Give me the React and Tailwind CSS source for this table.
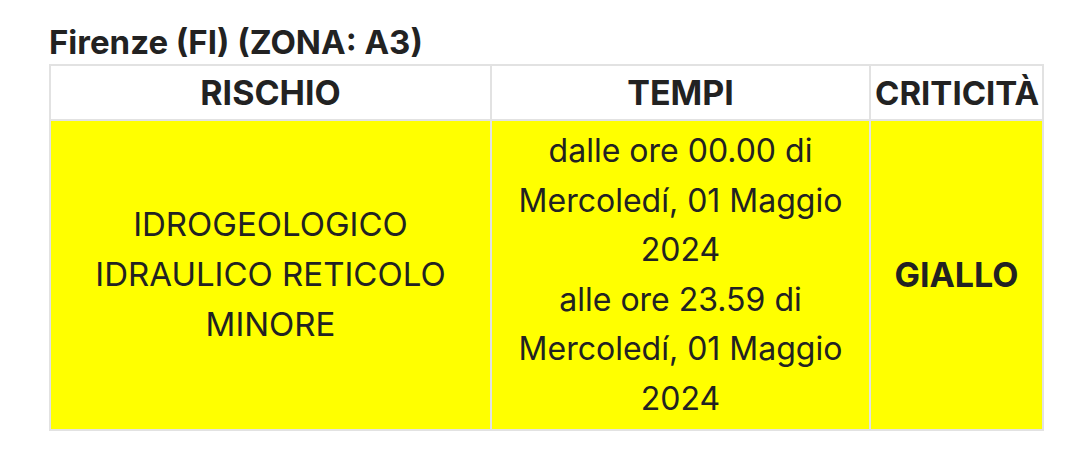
import React from 'react';

const cell = 'border-2 border-[#e2e2e2] text-center align-middle px-1';

export default function App() {
  return (
    <div className="bg-white w-[1090px] h-[452px] pl-[49px] pt-[24px] text-[#222] font-['Inter',sans-serif]">
      <h2 className="text-[33px] font-bold leading-[36px] mb-[4px]">Firenze (FI) (ZONA: A3)</h2>
      <table className="table-fixed border-collapse w-[993px]">
        <colgroup>
          <col className="w-[441px]" />
          <col className="w-[379px]" />
          <col className="w-[173px]" />
        </colgroup>
        <thead>
          <tr className="h-[55px]">
            <th className={`${cell} text-[34px] font-bold leading-[40px]`}>RISCHIO</th>
            <th className={`${cell} text-[34px] font-bold leading-[40px]`}>TEMPI</th>
            <th className={`${cell} text-[33px] font-bold leading-[40px] px-0`}>CRITICITÀ</th>
          </tr>
        </thead>
        <tbody>
          <tr className="bg-[#ffff00] text-[32px] leading-[49.6px]">
            <td className={`${cell} py-[5px] text-[33px]`}>
              IDROGEOLOGICO<br />IDRAULICO RETICOLO<br />MINORE
            </td>
            <td className={`${cell} py-[5px]`}>
              dalle ore 00.00 di<br />Mercoledí, 01 Maggio<br />2024<br />
              alle ore 23.59 di<br />Mercoledí, 01 Maggio<br />2024
            </td>
            <td className={`${cell} font-bold text-[34px]`}>GIALLO</td>
          </tr>
        </tbody>
      </table>
    </div>
  );
}
